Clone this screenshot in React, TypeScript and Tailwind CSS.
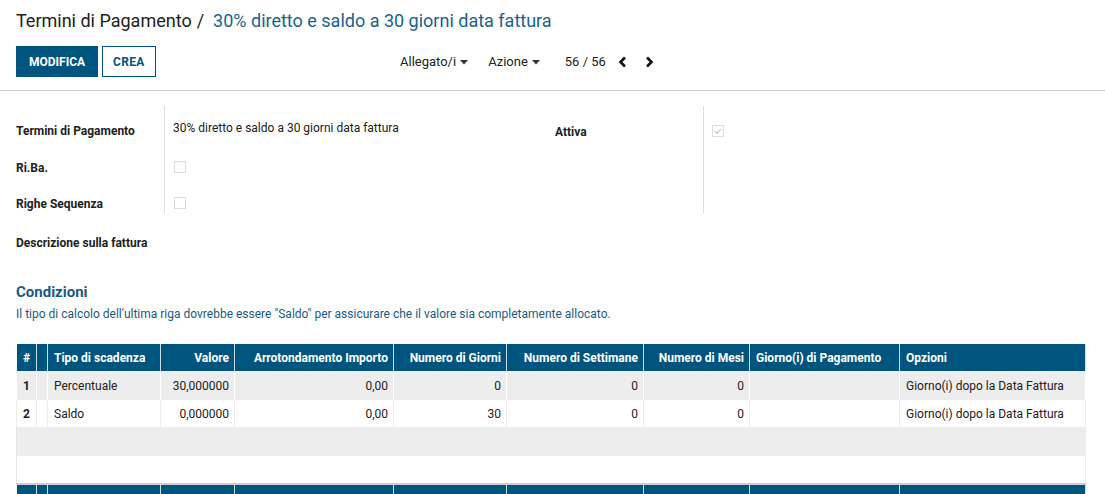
import React from "react"

const blue = "bg-[#00557f]"

const Caret = () => (
  <svg width="8" height="5" viewBox="0 0 8 5" className="ml-[4px] mt-[2px]">
    <path d="M0 0 L8 0 L4 4.5 Z" fill="#333" />
  </svg>
)

const Chevron = ({ dir }: { dir: "left" | "right" }) => (
  <svg width="9" height="12" viewBox="0 0 9 12">
    <path
      d={dir === "left" ? "M7 1.5 L2.5 6 L7 10.5" : "M2 1.5 L6.5 6 L2 10.5"}
      stroke="#111"
      strokeWidth="2.6"
      fill="none"
      strokeLinejoin="miter"
    />
  </svg>
)

const Checkbox = ({ checked }: { checked?: boolean }) => (
  <div className="w-[12px] h-[12px] border border-[#dcdcdc] bg-white flex items-center justify-center">
    {checked && (
      <svg width="10" height="10" viewBox="0 0 10 10">
        <path d="M2 5.2 L4.2 7.3 L8.3 2.8" stroke="#c8c8c8" strokeWidth="1.2" fill="none" />
      </svg>
    )}
  </div>
)

const cols = [20, 11, 113, 74, 159, 113, 137, 106, 150, 186]

const headers = [
  { t: "#", a: "left" },
  { t: "", a: "left" },
  { t: "Tipo di scadenza", a: "left" },
  { t: "Valore", a: "right" },
  { t: "Arrotondamento Importo", a: "right" },
  { t: "Numero di Giorni", a: "right" },
  { t: "Numero di Settimane", a: "right" },
  { t: "Numero di Mesi", a: "right" },
  { t: "Giorno(i) di Pagamento", a: "left" },
  { t: "Opzioni", a: "left" },
]

const rows = [
  ["1", "", "Percentuale", "30,000000", "0,00", "0", "0", "0", "", "Giorno(i) dopo la Data Fattura"],
  ["2", "", "Saldo", "0,000000", "0,00", "30", "0", "0", "", "Giorno(i) dopo la Data Fattura"],
]

const App = () => {
  return (
    <div className="w-[1105px] h-[494px] overflow-hidden bg-white flex font-['Roboto',sans-serif] text-[#212121]">
      <div className="flex-1 flex flex-col">
        {/* control panel */}
        <div className="border-b border-[#cccccc] pl-[16px] pt-[9px] pb-[13px]">
          <div className="text-[18px] leading-[24px] flex">
            <span>Termini di Pagamento</span>
            <span className="ml-[5px]">/</span>
            <span className="ml-[9px] text-[#18638f]">30% diretto e saldo a 30 giorni data fattura</span>
          </div>
          <div className="flex items-center mt-[13px] h-[31px]">
            <div className="w-[384px] flex gap-[4px]">
              <button className={`${blue} text-white text-[12px] font-bold h-[31px] px-[12px] border border-[#00557f]`}>
                MODIFICA
              </button>
              <button className="bg-white text-[#00557f] text-[12px] font-bold h-[31px] px-[10px] tracking-[0.3px] border border-[#00557f]">
                CREA
              </button>
            </div>
            <div className="flex items-center text-[13px] text-[#222]">
              <span>Allegato/i</span>
              <Caret />
              <span className="ml-[20px]">Azione</span>
              <Caret />
              <span className="ml-[25px]">56 / 56</span>
              <span className="ml-[12px] flex"><Chevron dir="left" /></span>
              <span className="ml-[18px] flex"><Chevron dir="right" /></span>
            </div>
          </div>
        </div>

        {/* form */}
        <div className="pl-[16px] pr-[20px] pt-[15px]">
          <div className="flex">
            <div className="w-[539px] text-[12px]">
              <div className="flex h-[42px]">
                <div className="w-[149px] border-r border-[#dddddd] font-bold pt-[16px]">Termini di Pagamento</div>
                <div className="pl-[8px] pt-[13px]">30% diretto e saldo a 30 giorni data fattura</div>
              </div>
              <div className="flex h-[36px]">
                <div className="w-[149px] border-r border-[#dddddd] font-bold pt-[11px]">Ri.Ba.</div>
                <div className="pl-[9px] pt-[13px]"><Checkbox /></div>
              </div>
              <div className="flex h-[29px]">
                <div className="w-[149px] border-r border-[#dddddd] font-bold pt-[11px]">Righe Sequenza</div>
                <div className="pl-[9px] pt-[13px]"><Checkbox /></div>
              </div>
            </div>
            <div className="w-[539px] text-[12px]">
              <div className="flex h-[107px]">
                <div className="w-[149px] border-r border-[#dddddd] font-bold pt-[17px]">Attiva</div>
                <div className="pl-[8px] pt-[19px]"><Checkbox checked /></div>
              </div>
            </div>
          </div>

          <div className="text-[12px] font-bold mt-[23px] leading-[14px]">Descrizione sulla fattura</div>

          <div className="text-[15px] font-bold text-[#1a5b83] mt-[33px] leading-[18px]">Condizioni</div>
          <div className="text-[12px] text-[#1a5b83] mt-[6px] leading-[14px]">
            Il tipo di calcolo dell'ultima riga dovrebbe essere "Saldo" per assicurare che il valore sia completamente allocato.
          </div>

          <table className="mt-[23px] table-fixed border-collapse w-[1069px] text-[12px] border-l border-[#e6e6e6]">
            <colgroup>
              {cols.map((w, i) => (
                <col key={i} style={{ width: w }} />
              ))}
            </colgroup>
            <thead>
              <tr className={`${blue} h-[27px]`}>
                {headers.map((h, i) => (
                  <th
                    key={i}
                    className={`text-white font-bold border-x border-white/80 whitespace-nowrap ${
                      h.a === "right" ? "text-right pr-[5px]" : "text-left pl-[6px]"
                    }`}
                  >
                    {h.t}
                  </th>
                ))}
              </tr>
            </thead>
            <tbody>
              {rows.map((r, ri) => (
                <tr key={ri} className={ri === 0 ? "bg-[#ededed] h-[29px]" : "bg-white h-[27px]"}>
                  {r.map((c, ci) => (
                    <td
                      key={ci}
                      className={`border-x ${ri === 0 ? "border-white" : "border-[#ececec]"} whitespace-nowrap ${
                        ci === 0 ? "font-bold" : ""
                      } ${headers[ci].a === "right" ? "text-right pr-[5px]" : "text-left pl-[6px]"}`}
                    >
                      {c}
                    </td>
                  ))}
                </tr>
              ))}
              <tr className="bg-[#ededed] h-[29px]">
                <td colSpan={10}></td>
              </tr>
              <tr className="bg-white h-[28px] border-b-2 border-[#cfcfcf]">
                <td colSpan={10} className="border-r border-[#eeeeee]"></td>
              </tr>
            </tbody>
            <tfoot>
              <tr className={`${blue} h-[27px]`}>
                {cols.map((_, i) => (
                  <td key={i} className="border-x border-white/80"></td>
                ))}
              </tr>
            </tfoot>
          </table>
        </div>
      </div>
      {/* right edge strip */}
      <div className="w-[3px] flex flex-col">
        <div className="h-[91px] bg-white"></div>
        <div className="h-[29px] bg-[#f4f4f4]"></div>
        <div className="flex-1 border-l-2 border-[#cccccc] bg-[#f8f8f8]"></div>
      </div>
    </div>
  )
}

export default App
